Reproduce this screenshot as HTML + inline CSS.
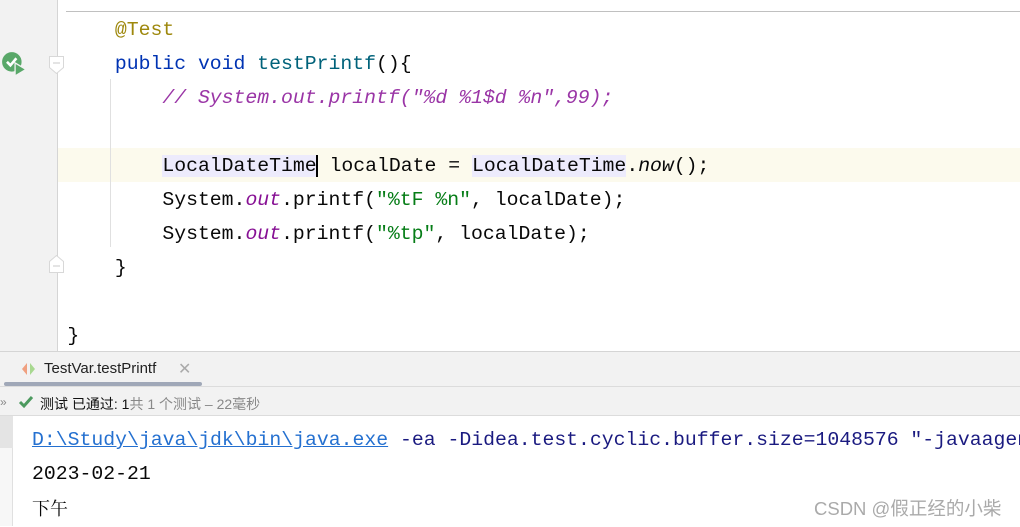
<!DOCTYPE html>
<html><head><meta charset="utf-8"><style>
*{margin:0;padding:0;box-sizing:border-box}
body{width:1020px;height:526px;overflow:hidden;background:#fff;position:relative;font-family:"Liberation Mono",monospace}
.a{position:absolute}
.code{position:absolute;font-size:19.8px;line-height:34px;white-space:pre;color:#080808}
.kw{color:#0033b3}.fn{color:#00627a}.an{color:#9e880d}.cm{font-style:italic;color:#9a35a6}
.st{color:#067d17}.it{font-style:italic}.fd{color:#871094;font-style:italic}
.hl{background:#edebfc}
.ui{font-family:"Liberation Sans","Noto Sans CJK SC",sans-serif}
</style></head><body>
<div class="a" style="left:0;top:0;width:57px;height:351px;background:#f2f2f2"></div>
<div class="a" style="left:57px;top:0;width:1px;height:351px;background:#d5d5d5"></div>
<div class="a" style="left:66px;top:11px;width:954px;height:1px;background:#c0c0c0"></div>
<div class="a" style="left:58px;top:148px;width:962px;height:34px;background:#fcfaed"></div>
<div class="a" style="left:110px;top:79px;width:1px;height:168px;background:#e0e0e0"></div>
<svg class="a" style="left:1px;top:51px" width="26" height="26" viewBox="0 0 24 24"><circle cx="10" cy="10" r="9" fill="#59a869"/><path d="M5.5 10l3.2 3.2 5.5-6.5" stroke="#fff" stroke-width="2.4" fill="none"/><path d="M13 11v12l10-6z" fill="#59a869" stroke="#f2f2f2" stroke-width="1.2"/></svg>
<svg class="a" style="left:48px;top:55px" width="18" height="20"><path d="M1.5 1.5h14v11l-7 6-7-6z" fill="#fff" stroke="#d8d8d8"/><path d="M5 8h7" stroke="#c8c8c8"/></svg>
<svg class="a" style="left:48px;top:254px" width="18" height="20"><path d="M1.5 18.5h14v-11l-7-6-7 6z" fill="#fff" stroke="#d8d8d8"/><path d="M5 12h7" stroke="#c8c8c8"/></svg>
<div class="code" style="left:8px;top:13px"><span>         </span><span class="an">@Test</span>
<span>         </span><span class="kw">public void </span><span class="fn">testPrintf</span>(){
<span>             </span><span class="cm">// System.out.printf("%d %1$d %n",99);</span>

<span>             </span><span class="hl">LocalDateTime</span><span style="border-left:2px solid #000;margin-left:-1px"></span> localDate = <span class="hl">LocalDateTime</span>.<span class="it">now</span>();
<span>             </span>System.<span class="fd">out</span>.printf(<span class="st">"%tF %n"</span>, localDate);
<span>             </span>System.<span class="fd">out</span>.printf(<span class="st">"%tp"</span>, localDate);
<span>         </span>}

<span>     </span>}</div>
<div class="a" style="left:0;top:351px;width:1020px;height:1px;background:#d5d5d5"></div>
<div class="a" style="left:0;top:352px;width:1020px;height:34px;background:#f2f2f2"></div>
<div class="a" style="left:4px;top:382px;width:198px;height:4px;background:#a0a8b8;border-radius:2px"></div>
<div class="a" style="left:0;top:386px;width:1020px;height:1px;background:#dcdcdc"></div>
<svg class="a" style="left:20px;top:361px" width="20" height="16"><path d="M7 2L2 8l5 6z" fill="#f0a080"/><path d="M10 2l5 6-5 6z" fill="#a8d890"/></svg>
<div class="a ui" style="left:44px;top:360px;font-size:15px;color:#222">TestVar.testPrintf</div>
<div class="a ui" style="left:178px;top:359px;font-size:16px;color:#aaa">✕</div>
<div class="a" style="left:0;top:387px;width:1020px;height:29px;background:#f2f2f2"></div>
<div class="a" style="left:0;top:415px;width:1020px;height:1px;background:#dcdcdc"></div>
<div class="a ui" style="left:0;top:395px;font-size:12px;color:#888">»</div>
<svg class="a" style="left:18px;top:395px" width="16" height="14"><path d="M2 7l4 4 8-9" stroke="#4c9a5f" stroke-width="3" fill="none"/></svg>
<div class="a ui" style="left:40px;top:394px;font-size:14px;color:#111">测试 已通过: 1<span style="color:#888">共 1 个测试 – 22毫秒</span></div>
<div class="a" style="left:0;top:416px;width:13px;height:110px;background:#f7f7f7;border-right:1px solid #e0e0e0"></div>
<div class="a" style="left:0;top:416px;width:13px;height:32px;background:#e4e4e4"></div>
<div class="code" style="left:32px;top:423px;color:#080808"><span style="color:#2470d0;text-decoration:underline">D:\Study\java\jdk\bin\java.exe</span><span style="color:#1a1a80"> -ea -Didea.test.cyclic.buffer.size=1048576 "-javaagent</span>
2023-02-21
<span style="font-family:'Noto Serif CJK SC',serif;font-size:18px">下午</span></div>
<div class="a ui" style="left:814px;top:495px;font-size:18.5px;color:#aaa">CSDN @假正经的小柴</div>
</body></html>
